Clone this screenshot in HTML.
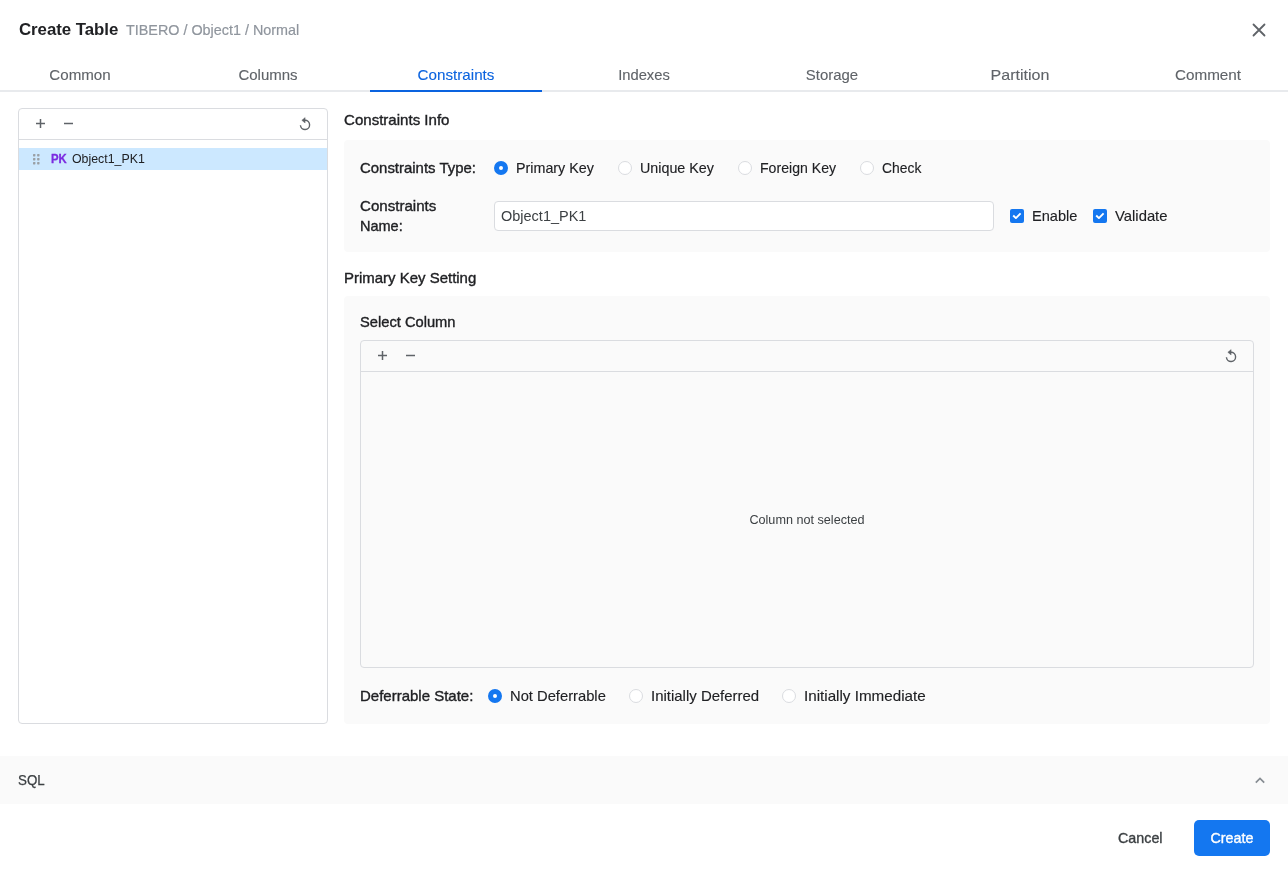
<!DOCTYPE html>
<html lang="en">
<head>
<meta charset="utf-8">
<title>Create Table</title>
<style>
*{box-sizing:border-box;margin:0;padding:0}
html,body{width:1288px;height:873px;overflow:hidden;background:#fff}
body{font-family:"Liberation Sans",sans-serif;color:#202124;position:relative;font-size:15px}
#app{position:absolute;left:0;top:0;width:1288px;height:873px;background:#fff;will-change:transform;overflow:hidden}
.abs{position:absolute}
.t{position:absolute;white-space:nowrap;line-height:20px;height:20px;transform-origin:left center;transform:scaleX(var(--sx,1))}
.t.c{transform-origin:center center}
.md{-webkit-text-stroke:.35px currentColor}
/* header */
#title{left:18.5px;top:20px;font-size:16.6px;font-weight:700;color:#202124;letter-spacing:-.05px}
#crumb{left:126px;top:20px;font-size:14.6px;color:#8f959d;-webkit-text-stroke:.2px #8f959d}
#close{left:1251px;top:22px;width:16px;height:16px}
/* tabs */
#tabline{left:0;top:90px;width:1288px;height:2px;background:#e8eaed}
#tabactive{left:370px;top:90px;width:172px;height:2px;background:#0a63df}
.tab{position:absolute;top:65px;width:172px;text-align:center;font-size:15px;line-height:20px;color:#5f6368;white-space:nowrap;transform:scaleX(var(--sx,1));-webkit-text-stroke:.12px currentColor}
.tab.on{color:#0a63df}
/* left list */
#list{left:18px;top:108px;width:310px;height:616px;border:1px solid #dadce0;border-radius:4px;background:#fff}
.tbline{position:absolute;left:0;right:0;top:30px;height:1px;background:#dadce0}
#row{left:0;top:39px;width:308px;height:22px;background:#cce8ff}
.ico{position:absolute;overflow:visible}
/* panels */
.panel{position:absolute;left:344px;width:926px;background:#fafafa;border-radius:4px}
#p1{top:140px;height:112px}
#p2{top:296px;height:428px}
.radio{position:absolute;width:14px;height:14px;border-radius:50%;border:1px solid #dadce0;background:#fff}
.radio.on{border:5px solid #1477f0;background:#fff}
.lbl{font-size:14.5px;color:#202124}
.opt{font-size:14.3px;color:#202124;-webkit-text-stroke:.12px #202124}
#input{left:494px;top:201px;width:500px;height:30px;border:1px solid #dadce0;border-radius:4px;background:#fff}
.cb{position:absolute;width:14px;height:14px;border-radius:2px;background:#1477f0}
#grid{left:360px;top:340px;width:894px;height:328px;border:1px solid #dadce0;border-radius:4px}
/* bottom */
#sqlbar{left:0;top:756px;width:1288px;height:48px;background:#fafafa}
#create{left:1194px;top:820px;width:76px;height:36px;border-radius:5px;background:#1477f0}
</style>
</head>
<body>
<div id="app">

<!-- header -->
<div class="t" id="title" style="--sx:1.0151;">Create Table</div>
<div class="t" id="crumb" style="--sx:0.984;">TIBERO / Object1 / Normal</div>
<svg class="abs" id="close" viewBox="0 0 16 16"><path d="M2.5 2.5 L13.5 13.5 M13.5 2.5 L2.5 13.5" stroke="#5f6368" stroke-width="1.8" stroke-linecap="round" fill="none"/></svg>

<!-- tabs -->
<div class="abs" id="tabline"></div>
<div class="abs" id="tabactive"></div>
<div class="tab" style="--sx:1.0089;left:-6px">Common</div>
<div class="tab" style="left:182px">Columns</div>
<div class="tab on" style="--sx:1.0128;left:370px">Constraints</div>
<div class="tab" style="--sx:0.9832;left:558px">Indexes</div>
<div class="tab" style="--sx:0.9955;left:746px">Storage</div>
<div class="tab" style="--sx:1.0697;left:934px">Partition</div>
<div class="tab" style="--sx:1.0175;left:1122px">Comment</div>

<!-- left list -->
<div class="abs" id="list">
  <svg class="ico" style="left:16px;top:9px" width="11" height="11" viewBox="0 0 11 11"><path d="M5.5 1 V10 M1 5.5 H10" stroke="#5f6368" stroke-width="1.5" fill="none"/></svg>
  <svg class="ico" style="left:44px;top:9px" width="11" height="11" viewBox="0 0 11 11"><path d="M1 5.5 H10" stroke="#5f6368" stroke-width="1.5" fill="none"/></svg>
  <svg class="ico" style="left:278px;top:7px" width="16" height="16" viewBox="0 0 16 16"><path d="M8 4.3 A4.6 4.6 0 1 1 3.42 9.3" stroke="#5f6368" stroke-width="1.4" fill="none"/><path d="M8.1 1.6 L4.8 4.3 L8.1 7 Z" fill="#5f6368" stroke="#5f6368" stroke-width=".4" stroke-linejoin="round"/></svg>
  <div class="tbline"></div>
  <div class="abs" id="row">
    <svg class="ico" style="left:14px;top:6px" width="8" height="11" viewBox="0 0 8 11"><g fill="#9aa0a6"><rect x="0" y="0" width="2.4" height="2.4" rx=".6"/><rect x="4.1" y="0" width="2.4" height="2.4" rx=".6"/><rect x="0" y="4" width="2.4" height="2.4" rx=".6"/><rect x="4.1" y="4" width="2.4" height="2.4" rx=".6"/><rect x="0" y="8" width="2.4" height="2.4" rx=".6"/><rect x="4.1" y="8" width="2.4" height="2.4" rx=".6"/></g></svg>
    <div class="t" style="--sx:0.9299;left:32px;top:1px;font-size:12.2px;font-weight:700;color:#7b2be0;-webkit-text-stroke:.3px #7b2be0">PK</div>
    <div class="t" style="--sx:1.014;left:53px;top:1px;font-size:12.2px;color:#202124">Object1_PK1</div>
  </div>
</div>

<!-- section 1 -->
<div class="t lbl md" style="--sx:1.0389;left:344px;top:110px">Constraints Info</div>
<div class="panel" id="p1"></div>
<div class="t lbl md" style="--sx:1.0298;left:360px;top:158px">Constraints Type:</div>
<div class="radio on" style="left:494px;top:161px"></div>
<div class="t opt" style="left:516px;top:158px">Primary Key</div>
<div class="radio" style="left:618px;top:161px"></div>
<div class="t opt" style="left:640px;top:158px">Unique Key</div>
<div class="radio" style="left:738px;top:161px"></div>
<div class="t opt" style="--sx:0.9868;left:760px;top:158px">Foreign Key</div>
<div class="radio" style="left:860px;top:161px"></div>
<div class="t opt" style="--sx:0.9707;left:882px;top:158px">Check</div>

<div class="t lbl md" style="--sx:1.0408;left:360px;top:196px">Constraints</div>
<div class="t lbl md" style="left:360px;top:216px">Name:</div>
<div class="abs" id="input"></div>
<div class="t" style="--sx:0.993;left:501px;top:206px;font-size:14.6px;color:#3c4043">Object1_PK1</div>
<div class="cb" style="left:1010px;top:209px"><svg width="14" height="14" viewBox="0 0 14 14" style="display:block"><path d="M3.2 6.5 L5.9 9.1 L10.6 4.4" stroke="#fff" stroke-width="1.9" fill="none" stroke-linejoin="round"/></svg></div>
<div class="t opt" style="--sx:1.0194;left:1032px;top:206px">Enable</div>
<div class="cb" style="left:1093px;top:209px"><svg width="14" height="14" viewBox="0 0 14 14" style="display:block"><path d="M3.2 6.5 L5.9 9.1 L10.6 4.4" stroke="#fff" stroke-width="1.9" fill="none" stroke-linejoin="round"/></svg></div>
<div class="t opt" style="--sx:1.0373;left:1115px;top:206px">Validate</div>

<!-- section 2 -->
<div class="t lbl md" style="--sx:1.0323;left:344px;top:268px">Primary Key Setting</div>
<div class="panel" id="p2"></div>
<div class="t lbl md" style="--sx:1.0129;left:360px;top:312px">Select Column</div>
<div class="abs" id="grid">
  <svg class="ico" style="left:16px;top:9px" width="11" height="11" viewBox="0 0 11 11"><path d="M5.5 1 V10 M1 5.5 H10" stroke="#5f6368" stroke-width="1.5" fill="none"/></svg>
  <svg class="ico" style="left:44px;top:9px" width="11" height="11" viewBox="0 0 11 11"><path d="M1 5.5 H10" stroke="#5f6368" stroke-width="1.5" fill="none"/></svg>
  <svg class="ico" style="left:862px;top:7px" width="16" height="16" viewBox="0 0 16 16"><path d="M8 4.3 A4.6 4.6 0 1 1 3.42 9.3" stroke="#5f6368" stroke-width="1.4" fill="none"/><path d="M8.1 1.6 L4.8 4.3 L8.1 7 Z" fill="#5f6368" stroke="#5f6368" stroke-width=".4" stroke-linejoin="round"/></svg>
  <div class="tbline"></div>
</div>
<div class="t c" style="--sx:1.0367;left:707px;top:510px;width:200px;text-align:center;font-size:12.2px;color:#3c4043">Column not selected</div>

<div class="t lbl md" style="--sx:1.034;left:360px;top:686px">Deferrable State:</div>
<div class="radio on" style="left:488px;top:689px"></div>
<div class="t opt" style="--sx:1.0308;left:510px;top:686px">Not Deferrable</div>
<div class="radio" style="left:629px;top:689px"></div>
<div class="t opt" style="--sx:1.0466;left:651px;top:686px">Initially Deferred</div>
<div class="radio" style="left:782px;top:689px"></div>
<div class="t opt" style="--sx:1.0635;left:804px;top:686px">Initially Immediate</div>

<!-- bottom -->
<div class="abs" id="sqlbar"></div>
<div class="t" style="--sx:0.9524;left:18px;top:770px;font-size:14px;color:#3c4043;-webkit-text-stroke:.25px #3c4043">SQL</div>
<svg class="abs" style="left:1254px;top:775px" width="12" height="10" viewBox="0 0 12 10"><path d="M1.8 7.7 L6 3.5 L10.2 7.7" stroke="#878d93" stroke-width="1.7" fill="none"/></svg>
<div class="t md" style="left:1118px;top:828px;font-size:14.3px;color:#3c4043">Cancel</div>
<div class="abs" id="create"></div>
<div class="t md c" style="left:1194px;top:828px;width:76px;text-align:center;font-size:14.3px;color:#fff">Create</div>

</div>
</body>
</html>
